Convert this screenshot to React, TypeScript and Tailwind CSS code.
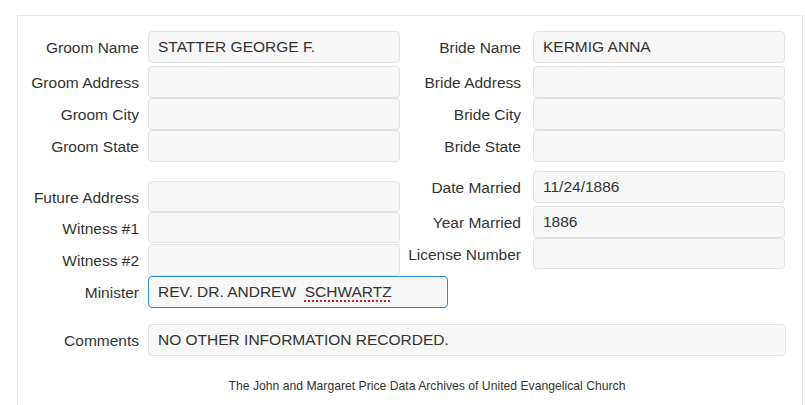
const font = { fontFamily: '"Liberation Sans", Arial, sans-serif' };

function Box({ value, className = '' }: { value?: React.ReactNode; className?: string }) {
  return (
    <div
      className={`flex shrink-0 items-center rounded-[4px] border border-[#e3e3e3] bg-[#f7f7f7] pl-[9px] text-[15.5px] text-[#333] whitespace-pre ${className}`}
    >
      {value}
    </div>
  );
}

function Row({
  label,
  value,
  top = '',
  h = 'h-[32px]',
  right = false,
  boxClass = 'w-[252px]',
}: {
  label: string;
  value?: React.ReactNode;
  top?: string;
  h?: string;
  right?: boolean;
  boxClass?: string;
}) {
  return (
    <div className={`flex items-center ${top}`}>
      <div
        className={`flex shrink-0 justify-end whitespace-nowrap pt-[2px] text-[15.5px] text-[#333] ${
          right ? 'w-[133px] pr-[12px]' : 'w-[130px] pr-[9px]'
        }`}
      >
        {label}
      </div>
      <Box value={value} className={`${h} ${boxClass}`} />
    </div>
  );
}

export default function App() {
  return (
    <div className="min-h-[405px] bg-white pt-[15px] pl-[17px] pr-[2px]" style={font}>
      <div className="h-[400px] border-t border-l border-r border-[#e6e6e6]">
        {/* upper block */}
        <div className="flex pt-[15px]">
          <div className="flex w-[382px] flex-col">
            <Row label="Groom Name" value="STATTER GEORGE F." />
            <Row label="Groom Address" top="mt-[3px]" />
            <Row label="Groom City" />
            <Row label="Groom State" />
          </div>
          <div className="flex flex-col">
            <Row label="Bride Name" value="KERMIG ANNA" right />
            <Row label="Bride Address" top="mt-[3px]" right />
            <Row label="Bride City" right />
            <Row label="Bride State" right />
          </div>
        </div>

        {/* lower block */}
        <div className="flex">
          <div className="flex w-[382px] shrink-0 flex-col pt-[19px]">
            <Row label="Future Address" h="h-[31px]" />
            <Row label="Witness #1" h="h-[31px]" />
            <Row label="Witness #2" top="mt-[1px]" />
            <Row
              label="Minister"
              boxClass="w-[300px] !border-[#2b8ed6]"
              value={
                <>
                  {'REV. DR. ANDREW  '}
                  <span className="underline decoration-dotted decoration-[#e02020] decoration-[1.5px] underline-offset-[3px]">
                    SCHWARTZ
                  </span>
                </>
              }
            />
          </div>
          <div className="flex flex-col pt-[9px]">
            <Row label="Date Married" value="11/24/1886" right />
            <Row label="Year Married" value="1886" top="mt-[3px]" right />
            <Row label="License Number" h="h-[31px]" right />
          </div>
        </div>

        {/* comments */}
        <div className="mt-[16px] flex items-center">
          <div className="w-[130px] shrink-0 pr-[9px] pt-[2px] text-right text-[15.5px] text-[#333]">Comments</div>
          <Box value="NO OTHER INFORMATION RECORDED." className="h-[32px] w-[638px]" />
        </div>

        <div className="mt-[21px] pl-[34px] text-center text-[12.2px] text-[#333]">
          The John and Margaret Price Data Archives of United Evangelical Church
        </div>
      </div>
    </div>
  );
}
